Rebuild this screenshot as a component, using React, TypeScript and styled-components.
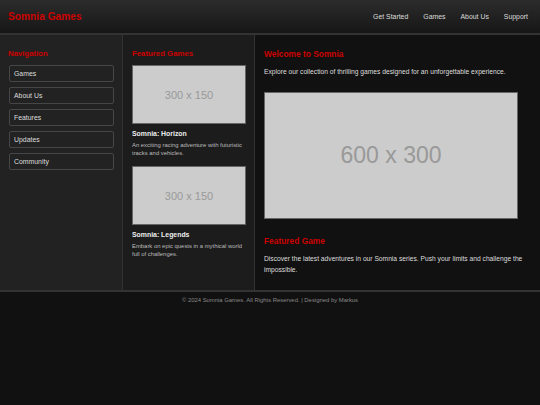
import React from 'react';
import styled, { createGlobalStyle } from 'styled-components';

const GlobalStyle = createGlobalStyle`
  html, body {
    margin: 0;
    padding: 0;
    background: #111111;
    font-family: "Liberation Sans", Arial, sans-serif;
  }
  * {
    box-sizing: border-box;
  }
`;

const Header = styled.header`
  height: 35px;
  padding: 0 12px 0 8px;
  display: flex;
  align-items: center;
  justify-content: space-between;
  background: linear-gradient(180deg, #2c2c2c 0%, #161616 100%);
  border-bottom: 2px solid #333333;
`;

const Logo = styled.h1`
  margin: 0;
  font-size: 10.2px;
  font-weight: 700;
  color: #cc0000;
`;

const TopNav = styled.nav`
  display: flex;
  gap: 15px;
`;

const TopLink = styled.a`
  font-size: 6.9px;
  color: #dddddd;
  text-decoration: none;

  &:link,
  &:visited {
    color: #dddddd;
  }
`;

const Layout = styled.div`
  display: grid;
  grid-template-columns: 123px 132px 1fr;
  grid-template-rows: 100%;
  height: 257px;
  overflow: hidden;
  border-bottom: 2px solid #333333;
`;

const Column = styled.section<{ $bg: string; $padLeft: number }>`
  background: ${(p) => p.$bg};
  border-right: 1px solid #333333;
  padding: 14px 8px 8px ${(p) => p.$padLeft}px;
  display: flex;
  flex-direction: column;
`;

const SideTitle = styled.h3`
  margin: 0 0 6px 0;
  font-size: 7.8px;
  line-height: 10px;
  font-weight: 700;
  color: #cc0000;
`;

const NavList = styled.div`
  display: flex;
  flex-direction: column;
  gap: 5px;
  margin-left: 1px;
`;

const NavButton = styled.a`
  display: flex;
  align-items: center;
  height: 17px;
  padding: 0 4px;
  border: 1px solid #464646;
  border-radius: 2px;
  background: #222222;
  font-size: 6.9px;
  color: #dddddd;
  text-decoration: none;

  &:link,
  &:visited {
    color: #dddddd;
  }
`;

const Placeholder = styled.div<{ $size: number; $h: number }>`
  height: ${(p) => p.$h}px;
  background: #cccccc;
  border: 1px solid #666666;
  display: flex;
  align-items: center;
  justify-content: center;
  font-size: ${(p) => p.$size}px;
  color: #999999;
`;

const GameCard = styled.div`
  display: flex;
  flex-direction: column;
  margin-bottom: 9px;
`;

const GameTitle = styled.h4`
  margin: 5px 0 3px 0;
  font-size: 6.9px;
  line-height: 10px;
  font-weight: 700;
  color: #eeeeee;
`;

const GameDesc = styled.p`
  margin: 0;
  font-size: 5.9px;
  line-height: 7.5px;
  color: #bbbbbb;
`;

const Main = styled.main`
  background: #111111;
  padding: 14px 8px 8px 9px;
  display: flex;
  flex-direction: column;
`;

const MainTitle = styled.h2`
  margin: 0 0 7px 0;
  font-size: 8.4px;
  line-height: 10px;
  font-weight: 700;
  color: #cc0000;
`;

const MainText = styled.p`
  margin: 0 0 15px 0;
  font-size: 6.7px;
  line-height: 11px;
  color: #dddddd;

  &:last-child {
    margin-bottom: 0;
  }
`;

const Hero = styled(Placeholder)`
  width: 254px;
  margin: 0 0 17px 0;
`;

const Footer = styled.footer`
  padding: 5px 0;
  text-align: center;
  font-size: 5.9px;
  color: #888888;
`;

const games = [
  { title: 'Somnia: Horizon', desc: 'An exciting racing adventure with futuristic tracks and vehicles.' },
  { title: 'Somnia: Legends', desc: 'Embark on epic quests in a mythical world full of challenges.' },
];

export default function App() {
  return (
    <>
      <GlobalStyle />
      <Header>
        <Logo>Somnia Games</Logo>
        <TopNav>
          {['Get Started', 'Games', 'About Us', 'Support'].map((t) => (
            <TopLink key={t} href="#">{t}</TopLink>
          ))}
        </TopNav>
      </Header>
      <Layout>
        <Column $bg="#222222" $padLeft={8}>
          <SideTitle>Navigation</SideTitle>
          <NavList>
            {['Games', 'About Us', 'Features', 'Updates', 'Community'].map((t) => (
              <NavButton key={t} href="#">{t}</NavButton>
            ))}
          </NavList>
        </Column>
        <Column $bg="#1c1c1c" $padLeft={9}>
          <SideTitle>Featured Games</SideTitle>
          {games.map((g) => (
            <GameCard key={g.title}>
              <Placeholder $size={11} $h={59}>300 x 150</Placeholder>
              <GameTitle>{g.title}</GameTitle>
              <GameDesc>{g.desc}</GameDesc>
            </GameCard>
          ))}
        </Column>
        <Main>
          <MainTitle>Welcome to Somnia</MainTitle>
          <MainText>Explore our collection of thrilling games designed for an unforgettable experience.</MainText>
          <Hero $size={23} $h={127}>600 x 300</Hero>
          <MainTitle>Featured Game</MainTitle>
          <MainText>Discover the latest adventures in our Somnia series. Push your limits and challenge the impossible.</MainText>
        </Main>
      </Layout>
      <Footer>© 2024 Somnia Games. All Rights Reserved. | Designed by Markus</Footer>
    </>
  );
}
